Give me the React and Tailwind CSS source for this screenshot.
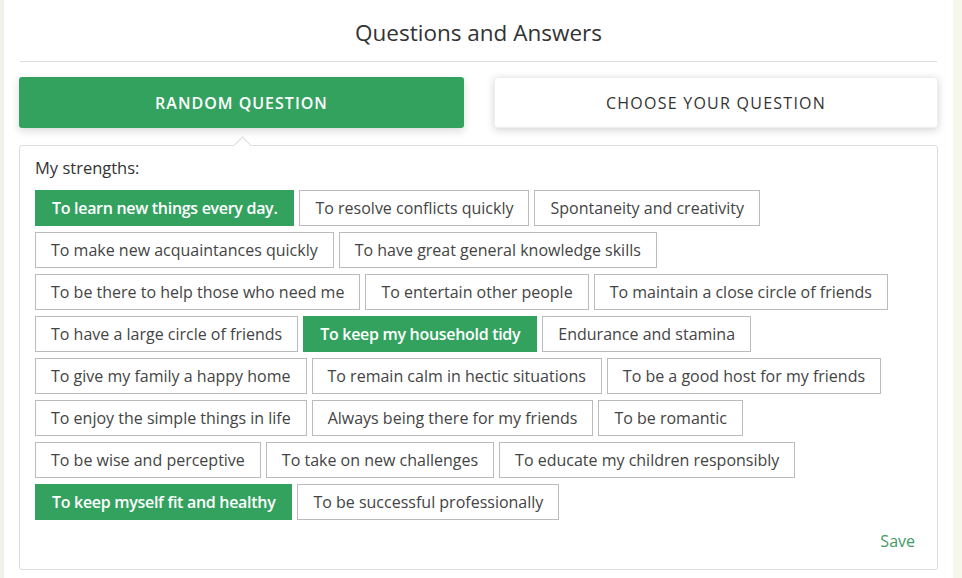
import { useState } from "react";

const strengths = [
  "To learn new things every day.",
  "To resolve conflicts quickly",
  "Spontaneity and creativity",
  "To make new acquaintances quickly",
  "To have great general knowledge skills",
  "To be there to help those who need me",
  "To entertain other people",
  "To maintain a close circle of friends",
  "To have a large circle of friends",
  "To keep my household tidy",
  "Endurance and stamina",
  "To give my family a happy home",
  "To remain calm in hectic situations",
  "To be a good host for my friends",
  "To enjoy the simple things in life",
  "Always being there for my friends",
  "To be romantic",
  "To be wise and perceptive",
  "To take on new challenges",
  "To educate my children responsibly",
  "To keep myself fit and healthy",
  "To be successful professionally",
];

const App = () => {
  const [selected, setSelected] = useState([
    "To learn new things every day.",
    "To keep my household tidy",
    "To keep myself fit and healthy",
  ]);

  const toggle = (s) => {
    setSelected((prev) =>
      prev.includes(s) ? prev.filter((x) => x !== s) : [...prev, s]
    );
  };

  return (
    <div
      className="min-h-[578px] bg-[#f8f7ec] flex"
      style={{ fontFamily: '"Open Sans", "Noto Sans", sans-serif' }}
    >
      <div className="w-[4px] bg-[#f1f1ec]" />
      <div className="w-[949px] bg-white px-[15px] pt-[18px]">
        <h1 className="text-center text-[22.5px] leading-[30px] text-[#333] pb-[13px] border-b border-[#ddd] mx-[1px]">
          Questions and Answers
        </h1>

        <div className="flex gap-[30px] mt-[15px]">
          <button className="w-[445px] h-[51px] rounded-[3px] bg-[#33a25f] text-white text-[16px] font-semibold tracking-[1px] uppercase shadow-[0_3px_8px_rgba(0,0,0,0.15)]">
            Random Question
          </button>
          <button className="w-[444px] h-[51px] rounded-[3px] bg-white text-[#333] text-[16px] tracking-[1.25px] uppercase shadow-[0_2px_8px_rgba(0,0,0,0.18)] border border-[#eee]">
            Choose your question
          </button>
        </div>

        <div className="relative mt-[17px] w-[919px] h-[425px] border border-[#ddd] rounded-[3px] px-[15px] pt-[11px]">
          <div className="absolute -top-[7px] left-[216px] w-[13px] h-[13px] bg-white border-l border-t border-[#ddd] rotate-45" />
          <p className="text-[16.5px] leading-[22px] text-[#333]">My strengths:</p>
          <div className="flex flex-wrap gap-x-[5px] gap-y-[6px] mt-[11px] pr-[20px]">
            {strengths.map((s) => {
              const on = selected.includes(s);
              return (
                <button
                  key={s}
                  onClick={() => toggle(s)}
                  className={
                    on
                      ? "h-[36px] px-[16px] border border-[#33a25f] bg-[#33a25f] text-white text-[16px] font-semibold tracking-[-0.3px]"
                      : "h-[36px] px-[15px] border border-[#bbb] bg-white text-[#444] text-[16px]"
                  }
                >
                  {s}
                </button>
              );
            })}
          </div>
          <div className="flex justify-end mt-[9px] pr-[7px]">
            <button className="text-[16px] text-[#3f9a68]">Save</button>
          </div>
        </div>
      </div>
    </div>
  );
};

export default App;
